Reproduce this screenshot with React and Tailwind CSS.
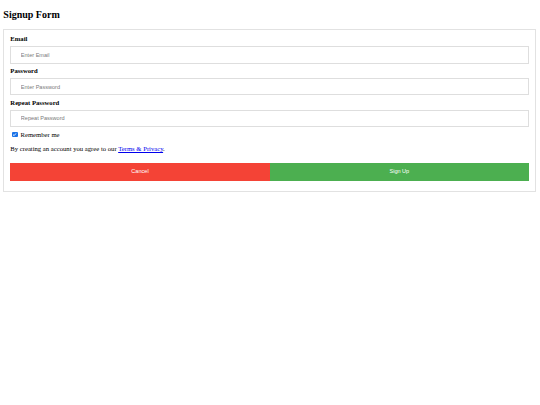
export default function App() {
  return (
    <div className="min-h-screen bg-white pl-[3.33px] pr-[4px] font-['Liberation_Serif','Times_New_Roman',serif] text-[6.67px] leading-[7.7px] text-black">
      <h2 className="py-[8.5px] text-[10px] font-bold leading-[11.5px]">Signup Form</h2>

      <form className="border border-[#e2e2e2] px-[6px] pt-[5.8px] pb-[9.8px]">
        <Field label="Email" placeholder="Enter Email" type="text" />
        <Field label="Password" placeholder="Enter Password" type="password" />
        <Field label="Repeat Password" placeholder="Repeat Password" type="password" />

        <label className="mt-[3px] flex h-[8px] items-center">
          <span className="ml-[1.8px] mr-[2.8px] flex h-[5.6px] w-[5.6px] items-center justify-center rounded-[1px] bg-[#1a73e8]">
            <svg viewBox="0 0 10 10" className="h-[5px] w-[5px]" fill="none" stroke="white" strokeWidth="1.8">
              <path d="M2 5.2 L4.2 7.3 L8 2.8" />
            </svg>
          </span>
          Remember me
        </label>

        <p className="mt-[7px]">
          By creating an account you agree to our{' '}
          <a href="#" className="text-[#0000ee] underline">
            Terms &amp; Privacy
          </a>
          .
        </p>

        <div className="mt-[10.4px] flex font-['Liberation_Sans',Arial,sans-serif] text-[5.56px] text-white">
          <button type="button" className="h-[17.4px] w-1/2 bg-[#f44336]">
            Cancel
          </button>
          <button type="submit" className="h-[17.4px] w-1/2 bg-[#4caf50]">
            Sign Up
          </button>
        </div>
      </form>
    </div>
  )
}

function Field({ label, placeholder, type }) {
  return (
    <div className="mb-[3.3px]">
      <label className="block font-bold">{label}</label>
      <input
        type={type}
        placeholder={placeholder}
        className="mt-[3.4px] block h-[17.3px] w-full border border-[#dedede] bg-white pl-[9.5px] font-['Liberation_Sans',Arial,sans-serif] text-[5.56px] outline-none placeholder:text-[#7a7a7a]"
      />
    </div>
  )
}
